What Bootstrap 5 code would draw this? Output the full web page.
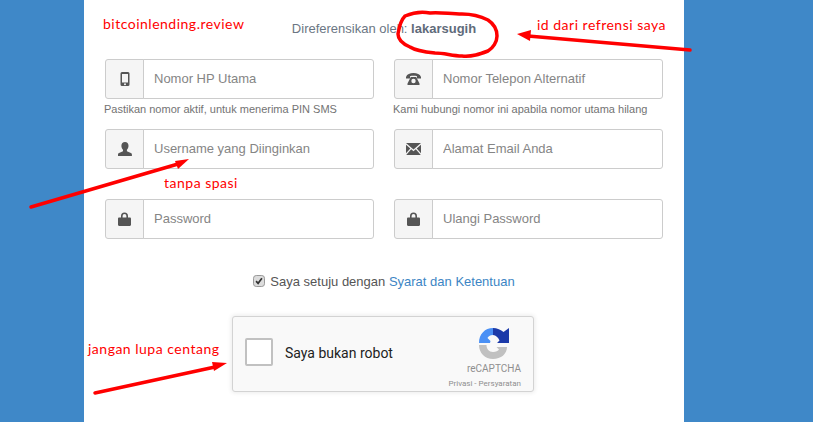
<!DOCTYPE html>
<html lang="id">
<head>
<meta charset="utf-8">
<title>Pendaftaran</title>
<link rel="stylesheet" href="https://cdn.jsdelivr.net/npm/bootstrap@5.3.0/dist/css/bootstrap.min.css">
<style>
html,body{height:100%;overflow:hidden}
body{background:#3f88c8;font-family:"Liberation Sans",Arial,sans-serif;font-size:13px;color:#555;position:relative}
.sheet{width:600px;height:422px;margin-left:84px;background:#fff;padding:19px 21px 0}
.ref-line{line-height:20px;margin-bottom:20px;color:#6b7683}
.ref-line b{color:#5f6b7a}
.reg-row{gap:20px}
.reg-cell{width:269px;margin-bottom:30px}
.reg-cell.has-help{margin-bottom:10px}
.reg-group{height:40px}
.reg-group .input-group-text{width:39px;padding:0;justify-content:center;background:#f5f5f5;border-color:#ccc;border-radius:3px 0 0 3px}
.reg-group .form-control{height:40px;padding:4px 10px 6px;font-size:13px;border-color:#ccc;border-radius:0 3px 3px 0;color:#555}
.reg-group .form-control::placeholder{color:#858585;opacity:1}
.reg-help{font-size:11px;line-height:20px;color:#737373;white-space:nowrap;margin-left:-1px}
.agree-line{line-height:20px;margin-top:3px;margin-bottom:24px;gap:5px}
.agree-line a{color:#3c85c4;text-decoration:none}
.agree-box{width:12px;height:12px;margin:0 0 3px;background-color:#dcdcdc;border-color:#8a8a8a;border-radius:2px}
.agree-box:checked{background-color:#dcdcdc;border-color:#999;background-image:url("data:image/svg+xml,%3Csvg xmlns='http://www.w3.org/2000/svg' viewBox='0 0 12 12'%3E%3Cpath d='M2.5 6.2l2.4 2.6 4.6-6' fill='none' stroke='%23333' stroke-width='2'/%3E%3C/svg%3E")}
.captcha-box{width:302px;height:76px;background:#f9f9f9;border:1px solid #d3d3d3;border-radius:3px;box-shadow:0 0 4px 1px rgba(0,0,0,.08);font-family:Roboto,sans-serif;padding:0 12px;margin-left:127px}
.captcha-tick{width:28px;height:28px;background:#fff;border:2px solid #c1c1c1;border-radius:2px;margin:0 12px 4px 0}
.captcha-label{font-size:14px;color:#222;margin-bottom:2px}
.captcha-side{width:66px;color:#8f8f8f;padding-top:11px}
.captcha-logo{margin-right:11px}
.captcha-name{font-size:10px;line-height:12px;margin-top:3px;white-space:nowrap}
.captcha-terms{font-size:8px;line-height:10px;margin-top:4px;white-space:nowrap}
.ink-layer{position:absolute;left:0;top:0;width:813px;height:422px;pointer-events:none}
.ink-note{position:absolute;color:#f00;font-family:Lato,sans-serif;font-size:14px;letter-spacing:.5px;line-height:18px;white-space:nowrap}
.note-site{left:103px;top:15px}
.note-id{left:537px;top:16px}
.note-space{left:164px;top:174px}
.note-tick{left:88px;top:340px}
</style>
</head>
<body>
<main class="sheet">
  <p class="ref-line text-center">Direferensikan oleh: <b>lakarsugih</b></p>
  <div class="d-flex reg-row">
    <div class="reg-cell has-help">
      <div class="input-group reg-group">
        <span class="input-group-text"><svg width="14" height="14" viewBox="0 0 14 14"><path fill="#555" fill-rule="evenodd" d="M4 0h6a1.5 1.5 0 0 1 1.500 1.500v11A1.500 1.500 0 0 1 10 14H4a1.500 1.500 0 0 1-1.500-1.500v-11A1.500 1.500 0 0 1 4 0zm0 2v8.500h6V2zm3 9.200a1 1 0 1 0 0 2 1 1 0 0 0 0-2z"/></svg></span>
        <input class="form-control" type="text" placeholder="Nomor HP Utama">
      </div>
      <div class="reg-help">Pastikan nomor aktif, untuk menerima PIN SMS</div>
    </div>
    <div class="reg-cell has-help">
      <div class="input-group reg-group">
        <span class="input-group-text"><svg width="15" height="14" viewBox="0 0 15 14"><path fill="#555" fill-rule="evenodd" d="M0 5C1 2 4 1 7.500 1S14 2 15 5v1.500h-4V4.200C10 3.900 9 3.800 7.500 3.800S5 3.900 4 4.200v2.300H0zM4.800 5h5.400l3.300 6.500V13h-12v-1.500zm2.700 1.800a2.200 2.200 0 1 0 0 4.400 2.200 2.200 0 0 0 0-4.400z"/></svg></span>
        <input class="form-control" type="text" placeholder="Nomor Telepon Alternatif">
      </div>
      <div class="reg-help">Kami hubungi nomor ini apabila nomor utama hilang</div>
    </div>
  </div>
  <div class="d-flex reg-row">
    <div class="reg-cell">
      <div class="input-group reg-group">
        <span class="input-group-text"><svg width="14" height="14" viewBox="0 0 14 14"><path fill="#555" d="M7 0c2.200 0 3.500 1.600 3.500 3.800 0 1.700-.7 3.200-1.600 4v1.400l4 1.800c.7.300 1 .8 1 1.500V14H0v-1.500c0-.7.300-1.200 1-1.500l4-1.800V7.800c-.9-.8-1.600-2.300-1.600-4C3.400 1.600 4.800 0 7 0z"/></svg></span>
        <input class="form-control" type="text" placeholder="Username yang Diinginkan">
      </div>
    </div>
    <div class="reg-cell">
      <div class="input-group reg-group">
        <span class="input-group-text"><svg width="15" height="12" viewBox="0 0 15 12"><path fill="#555" d="M0 0h15L7.500 6.500zM0 1.800l4.300 3.700L0 10.200zM15 1.800v8.400l-4.300-4.700zM5.200 6.300l2.300 2 2.300-2 5 5.700H.200z"/></svg></span>
        <input class="form-control" type="email" placeholder="Alamat Email Anda">
      </div>
    </div>
  </div>
  <div class="d-flex reg-row">
    <div class="reg-cell">
      <div class="input-group reg-group">
        <span class="input-group-text"><svg width="13" height="14" viewBox="0 0 13 14"><path fill="#555" fill-rule="evenodd" d="M3 5.500V4a3.500 3.500 0 0 1 7 0v1.500h1.800c.7 0 1.200.5 1.200 1.200v6.100c0 .7-.5 1.200-1.200 1.200H1.200C.5 14 0 13.500 0 12.800V6.700c0-.7.5-1.200 1.200-1.200zM4.600 5.500h3.800V4a1.900 1.900 0 0 0-3.800 0z"/></svg></span>
        <input class="form-control" type="password" placeholder="Password">
      </div>
    </div>
    <div class="reg-cell">
      <div class="input-group reg-group">
        <span class="input-group-text"><svg width="13" height="14" viewBox="0 0 13 14"><path fill="#555" fill-rule="evenodd" d="M3 5.500V4a3.500 3.500 0 0 1 7 0v1.500h1.800c.7 0 1.200.5 1.200 1.200v6.100c0 .7-.5 1.200-1.200 1.200H1.200C.5 14 0 13.500 0 12.800V6.700c0-.7.5-1.200 1.200-1.200zM4.600 5.500h3.800V4a1.900 1.900 0 0 0-3.800 0z"/></svg></span>
        <input class="form-control" type="password" placeholder="Ulangi Password">
      </div>
    </div>
  </div>
  <div class="agree-line d-flex justify-content-center align-items-center">
    <input class="form-check-input agree-box" type="checkbox" checked>
    <span>Saya setuju dengan <a href="#">Syarat dan Ketentuan</a></span>
  </div>
  <div class="captcha-box d-flex align-items-center">
    <span class="captcha-tick"></span>
    <span class="captcha-label flex-grow-1">Saya bukan robot</span>
    <div class="captcha-side d-flex flex-column align-items-end align-self-start">
      <svg class="captcha-logo" width="32" height="32" viewBox="0 0 32 32">
        <path fill="#c1c1c1" d="M1 17H8.500C8.500 21 11 24 15 24C18 24 20 23 21 21.500L18.500 19H29C29 26 23 31 15 31C7 31 1 25 1 17Z"/>
        <path fill="#4a90f5" d="M15 0V7C12 7 10 8.500 9.500 10L12.500 13L12 15H1C1 6 7 0 15 0Z"/>
        <path fill="#1c3aa9" d="M15 0C19 0 23 2 25.500 4L31 0V15H19L21.500 12.500C20 9 18 7.500 15 7Z"/>
      </svg>
      <div class="captcha-name">reCAPTCHA</div>
      <div class="captcha-terms">Privasi - Persyaratan</div>
    </div>
  </div>
</main>
<div class="ink-layer">
  <svg width="813" height="422" viewBox="0 0 813 422" class="position-absolute top-0 start-0">
    <path d="M405 16C412 13 420 11 430 13C440 12 450 14 462 14C472 14 482 17 488 20C494 24 497 30 497 36C497 42 493 48 488 51C480 54 472 57 462 56C452 56 445 53 435 53C425 52 416 51 410 47C403 44 398 39 398 34C399 28 400 21 405 16Z" fill="none" stroke="#f00" stroke-width="3.500"/>
    <g fill="none" stroke="#f00" stroke-linecap="round">
      <path d="M690 50L528 36" stroke-width="3.500"/>
      <path d="M31 207L178 164" stroke-width="3.500"/>
      <path d="M95 393L215 367" stroke-width="3.500"/>
    </g>
    <path fill="#f00" d="M517 34L531 30L530 41Z"/>
    <path fill="#f00" d="M189 159L175 161L178 169Z"/>
    <path fill="#f00" d="M227 363L212 362L214 371Z"/>
  </svg>
  <span class="ink-note note-site">bitcoinlending.review</span>
  <span class="ink-note note-id">id dari refrensi saya</span>
  <span class="ink-note note-space">tanpa spasi</span>
  <span class="ink-note note-tick">jangan lupa centang</span>
</div>
<script src="https://cdn.jsdelivr.net/npm/bootstrap@5.3.0/dist/js/bootstrap.bundle.min.js"></script>
</body>
</html>
